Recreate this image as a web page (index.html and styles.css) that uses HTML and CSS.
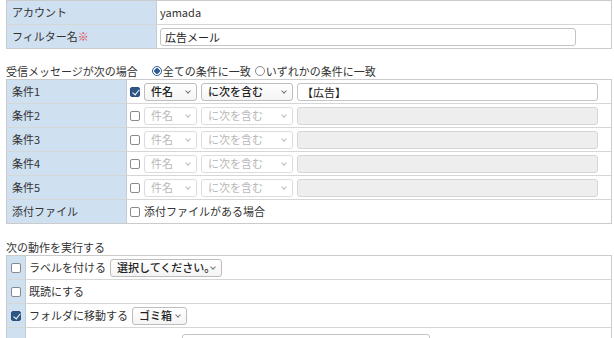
FILE: index.html
```html
<!DOCTYPE html>
<html>
<head>
    <meta charset="utf-8">
    <title>フィルター設定</title>
    <link rel="stylesheet" href="styles.css">
</head>
<body>
    <div class="form-table cols-wide">
        <div class="row">
            <div class="label">アカウント</div>
            <div class="value">yamada</div>
        </div>
        <div class="row">
            <div class="label">フィルター名<span class="req">※</span></div>
            <div class="value"><input class="text-input name-input" type="text" value="広告メール"></div>
        </div>
    </div>

    <div class="caption caption-cond">
        受信メッセージが次の場合
        <label class="radio-label"><span class="radio checked"></span>全ての条件に一致</label>
        <label class="radio-label"><span class="radio"></span>いずれかの条件に一致</label>
    </div>

    <div class="form-table cols-mid">
        <div class="row">
            <div class="label">条件1</div>
            <div class="value">
                <span class="check checked"></span>
                <span class="select w-field">件名</span>
                <span class="select w-op">に次を含む</span>
                <input class="text-input cond-input" type="text" value="【広告】">
            </div>
        </div>
        <div class="row">
            <div class="label">条件2</div>
            <div class="value">
                <span class="check"></span>
                <span class="select w-field disabled">件名</span>
                <span class="select w-op disabled">に次を含む</span>
                <input class="text-input cond-input" type="text" disabled>
            </div>
        </div>
        <div class="row">
            <div class="label">条件3</div>
            <div class="value">
                <span class="check"></span>
                <span class="select w-field disabled">件名</span>
                <span class="select w-op disabled">に次を含む</span>
                <input class="text-input cond-input" type="text" disabled>
            </div>
        </div>
        <div class="row">
            <div class="label">条件4</div>
            <div class="value">
                <span class="check"></span>
                <span class="select w-field disabled">件名</span>
                <span class="select w-op disabled">に次を含む</span>
                <input class="text-input cond-input" type="text" disabled>
            </div>
        </div>
        <div class="row">
            <div class="label">条件5</div>
            <div class="value">
                <span class="check"></span>
                <span class="select w-field disabled">件名</span>
                <span class="select w-op disabled">に次を含む</span>
                <input class="text-input cond-input" type="text" disabled>
            </div>
        </div>
        <div class="row">
            <div class="label">添付ファイル</div>
            <div class="value"><span class="check"></span>添付ファイルがある場合</div>
        </div>
    </div>

    <div class="caption caption-actions">次の動作を実行する</div>

    <div class="form-table cols-narrow">
        <div class="row">
            <div class="label"><span class="check"></span></div>
            <div class="value">ラベルを付ける <span class="select w-label">選択してください。</span></div>
        </div>
        <div class="row">
            <div class="label"><span class="check"></span></div>
            <div class="value">既読にする</div>
        </div>
        <div class="row">
            <div class="label"><span class="check checked"></span></div>
            <div class="value">フォルダに移動する <span class="select w-folder">ゴミ箱</span></div>
        </div>
        <div class="row row-tall">
            <div class="label"></div>
            <div class="value forward"><input class="text-input fwd-input" type="text"></div>
        </div>
    </div>
</body>
</html>
```

FILE: styles.css
```css
* {
    box-sizing: border-box;
}
body {
    margin: 0;
    padding: 0 2px 0 6px;
    font-family: "Noto Sans CJK JP", "Noto Sans", sans-serif;
    font-size: 11px;
    line-height: 1.3;
    color: #333;
    background-color: #fff;
    overflow: hidden;
}

/* bordered form grids */
.form-table {
    width: 606px;
    border: 1px solid #cbcbcb;
}
.row {
    display: grid;
    height: 24px;
    border-top: 1px solid #d6d6d6;
}
.row:first-child {
    height: 23px;
    border-top: 0;
}
.row-tall {
    height: 40px;
}
.cols-wide .row {
    grid-template-columns: 150px 1fr;
}
.cols-mid .row {
    grid-template-columns: 120px 1fr;
}
.cols-narrow .row {
    grid-template-columns: 19px 1fr;
}
.label {
    display: flex;
    align-items: center;
    padding-left: 5px;
    background-color: #cfe0f0;
    border-right: 1px solid #c4ccd6;
}
.cols-narrow .label {
    padding-left: 4px;
}
.value {
    display: flex;
    align-items: center;
    gap: 4px;
    padding-left: 3px;
}
.req {
    color: #e0404a;
}

/* section captions */
.caption {
    display: flex;
    align-items: center;
    height: 15px;
}
.caption-cond {
    margin-top: 15px;
}
.caption-actions {
    margin-top: 16px;
}
.radio-label {
    display: flex;
    align-items: center;
}
.radio-label:first-of-type {
    margin-left: 14px;
}
.radio-label + .radio-label {
    margin-left: 4px;
}
.radio {
    display: inline-block;
    width: 10px;
    height: 10px;
    margin-right: 1px;
    border: 1px solid #888;
    border-radius: 50%;
    background: #fff;
}
.radio.checked {
    border-color: #2e5d91;
    background: radial-gradient(circle, #2e5d91 0 2.5px, #fff 3px);
}

/* controls */
.check {
    display: inline-block;
    position: relative;
    flex: none;
    width: 10px;
    height: 10px;
    border: 1px solid #8a8a8a;
    border-radius: 2px;
    background: #fff;
}
.check.checked {
    border-color: #2b4f7a;
    background: #2e5686;
}
.check.checked::after {
    content: "";
    position: absolute;
    left: 2.5px;
    top: 0;
    width: 3px;
    height: 6px;
    border: solid #fff;
    border-width: 0 1.5px 1.5px 0;
    transform: rotate(40deg);
}
.select {
    display: inline-flex;
    align-items: center;
    position: relative;
    height: 18px;
    padding: 0 0 0 6px;
    font-weight: 500;
    color: #222;
    border: 1px solid #bdbdbd;
    border-radius: 3px;
    background: linear-gradient(#fff, #f4f4f4);
}
.select::after {
    content: "";
    position: absolute;
    right: 6px;
    top: 5px;
    width: 3px;
    height: 3px;
    border: solid #777;
    border-width: 0 1px 1px 0;
    transform: rotate(45deg);
}
.select.disabled {
    font-weight: normal;
    color: #b8b8b8;
    border-color: #dcdcdc;
    background: #fff;
}
.select.disabled::after {
    border-color: #bbb;
}
.w-field {
    width: 53px;
}
.w-op {
    width: 92px;
}
.w-label {
    width: 112px;
}
.w-folder {
    width: 55px;
}
.text-input {
    height: 18px;
    padding: 0 4px;
    font-family: inherit;
    font-size: 11px;
    color: #222;
    border: 1px solid #c4c4c4;
    border-radius: 3px;
    background: #fff;
    outline: none;
}
.text-input:disabled {
    background: #eee;
    border-color: #d6d6d6;
}
.name-input {
    width: 416px;
}
.cond-input {
    width: 301px;
}
.forward {
    align-items: flex-start;
    padding-left: 156px;
    padding-top: 6px;
}
.fwd-input {
    width: 248px;
}
```
